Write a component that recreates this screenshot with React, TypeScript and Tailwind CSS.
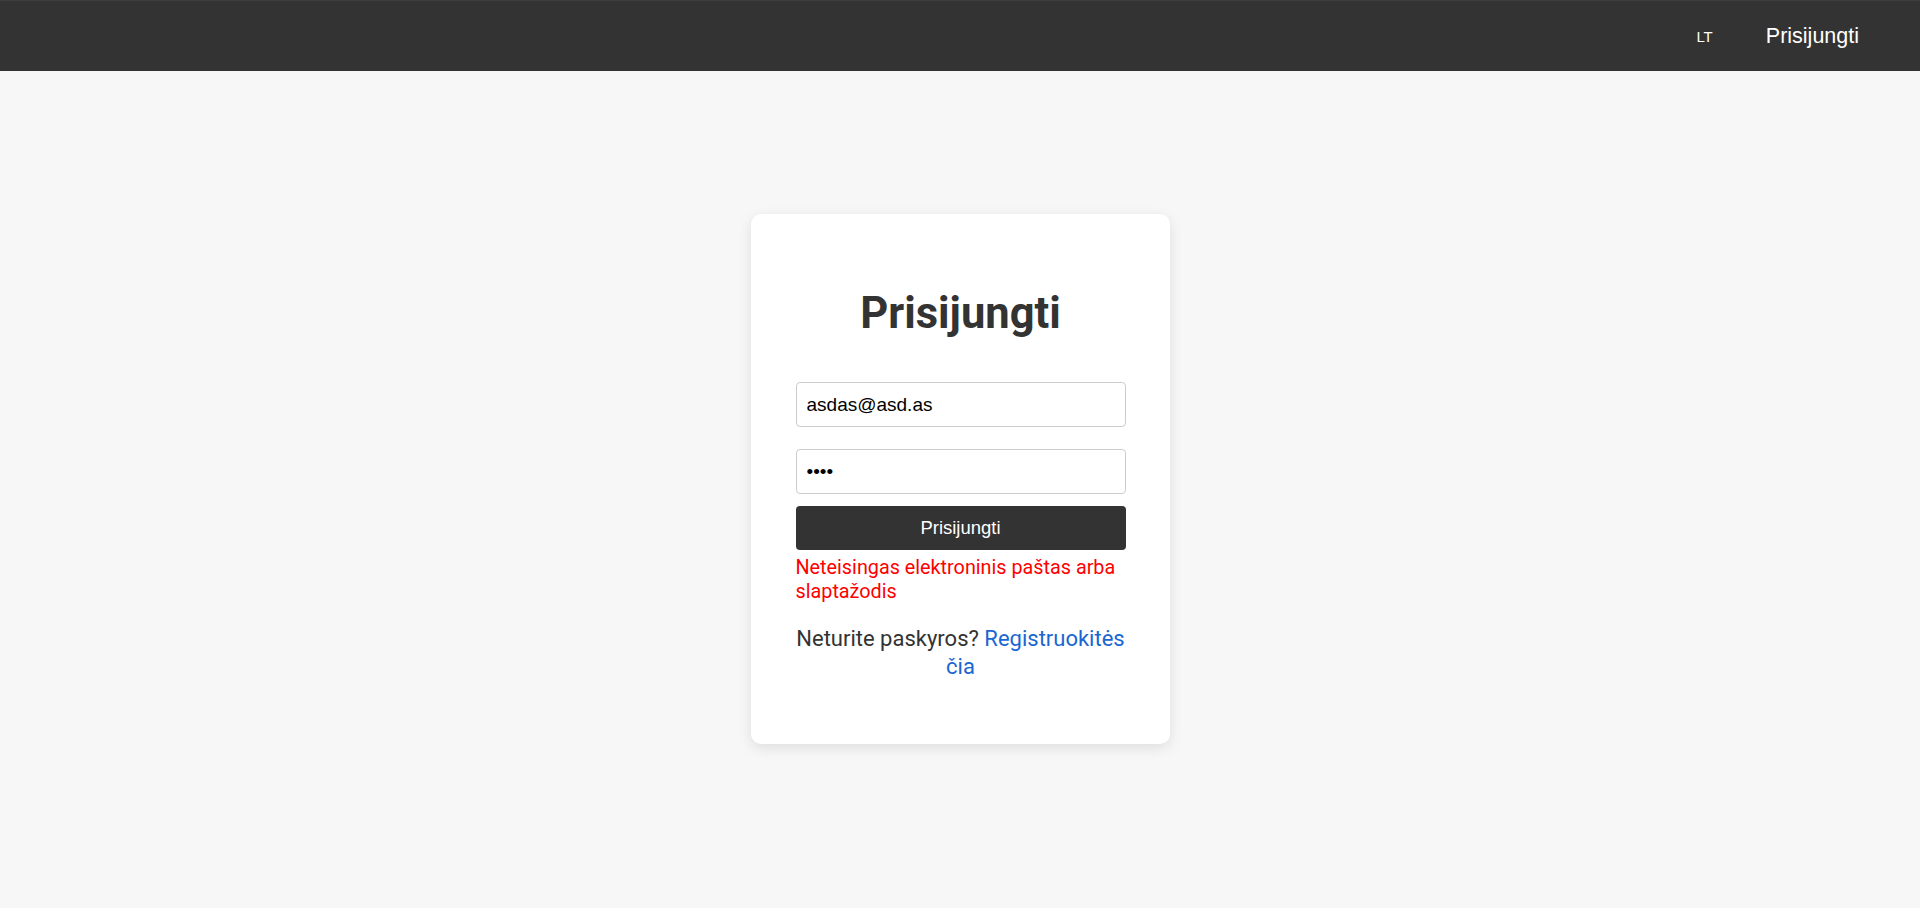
import React from "react";

export default function App() {
  return (
    <div className="min-h-[908px] w-full bg-[#f7f7f7] font-['Roboto',sans-serif]">
      <header className="flex h-[71px] items-center justify-end border-t border-[#3d3d3d] bg-[#333333] pr-[61px] font-['Liberation_Sans',Arial,sans-serif] text-white">
        <span className="mt-[2px] text-[15px]">LT</span>
        <span className="ml-[53px] text-[21.5px]">Prisijungti</span>
      </header>
      <main className="flex justify-center pt-[143px]">
        <div className="flex h-[530px] w-[419px] flex-col rounded-[10px] bg-white pl-[45px] pr-[44px] pt-[73px] shadow-[0_4px_14px_rgba(0,0,0,0.10)]">
          <h1 className="text-center text-[43.5px] font-bold leading-[54px] text-[#333333]">Prisijungti</h1>
          <input
            type="email"
            defaultValue="asdas@asd.as"
            className="mt-[41px] h-[45px] w-full rounded-[4px] border border-[#cccccc] px-[10px] font-['Liberation_Sans',Arial,sans-serif] text-[19px] text-black outline-none"
          />
          <input
            type="password"
            defaultValue="asdf"
            className="mt-[22px] h-[45px] w-full rounded-[4px] border border-[#cccccc] px-[10px] font-['Liberation_Sans',Arial,sans-serif] text-[19px] text-black outline-none"
          />
          <button className="mt-[12px] h-[44px] w-full rounded-[4px] bg-[#333333] font-['Liberation_Sans',Arial,sans-serif] text-[18.5px] text-white">
            Prisijungti
          </button>
          <p className="mt-[6px] text-[19.8px] leading-[23.5px] text-[#ff0000]">
            Neteisingas elektroninis paštas arba slaptažodis
          </p>
          <p className="mt-[22px] text-center text-[22px] leading-[27.5px] text-[#333333]">
            Neturite paskyros?{" "}
            <a href="#" className="text-[#1a66d2]">
              Registruokitės čia
            </a>
          </p>
        </div>
      </main>
    </div>
  );
}
